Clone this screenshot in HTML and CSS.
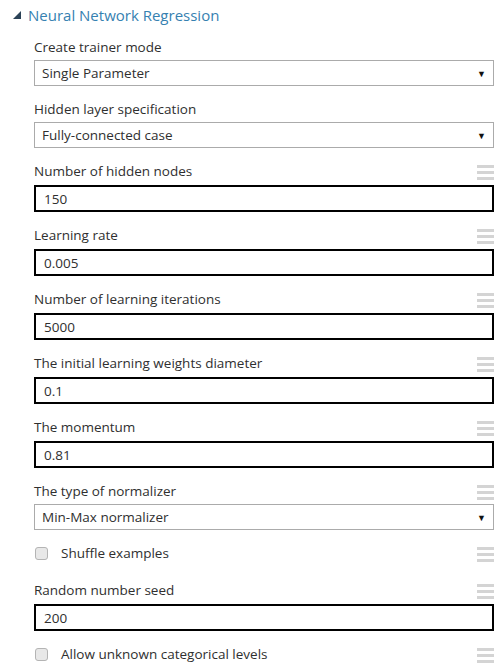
FILE: index.html
```html
<!DOCTYPE html>
<html>
<head>
<meta charset="utf-8">
<link rel="stylesheet" href="styles.css">
</head>
<body>
<div class="panel">
  <div class="header">
    <svg class="caret" width="8" height="8" viewBox="0 0 8 8"><polygon points="8,0 8,8 0,8" fill="#2b4257"/></svg>
    <span class="title">Neural Network Regression</span>
  </div>
  <div class="fields">
    <div class="field">
      <div class="label"><span>Create trainer mode</span></div>
      <div class="select"><span>Single Parameter</span><span class="arrow">▼</span></div>
    </div>
    <div class="field">
      <div class="label"><span>Hidden layer specification</span></div>
      <div class="select"><span>Fully-connected case</span><span class="arrow">▼</span></div>
    </div>
    <div class="field">
      <div class="label"><span>Number of hidden nodes</span><span class="grip"><i></i><i></i><i></i></span></div>
      <div class="input">150</div>
    </div>
    <div class="field">
      <div class="label"><span>Learning rate</span><span class="grip"><i></i><i></i><i></i></span></div>
      <div class="input">0.005</div>
    </div>
    <div class="field">
      <div class="label"><span>Number of learning iterations</span><span class="grip"><i></i><i></i><i></i></span></div>
      <div class="input">5000</div>
    </div>
    <div class="field">
      <div class="label"><span>The initial learning weights diameter</span><span class="grip"><i></i><i></i><i></i></span></div>
      <div class="input">0.1</div>
    </div>
    <div class="field">
      <div class="label"><span>The momentum</span><span class="grip"><i></i><i></i><i></i></span></div>
      <div class="input">0.81</div>
    </div>
    <div class="field">
      <div class="label"><span>The type of normalizer</span><span class="grip"><i></i><i></i><i></i></span></div>
      <div class="select"><span>Min-Max normalizer</span><span class="arrow">▼</span></div>
    </div>
    <div class="check-row">
      <span class="check"><span class="box"></span><span>Shuffle examples</span></span>
      <span class="grip"><i></i><i></i><i></i></span>
    </div>
    <div class="field seed">
      <div class="label"><span>Random number seed</span><span class="grip"><i></i><i></i><i></i></span></div>
      <div class="input">200</div>
    </div>
    <div class="check-row">
      <span class="check"><span class="box"></span><span>Allow unknown categorical levels</span></span>
      <span class="grip"><i></i><i></i><i></i></span>
    </div>
  </div>
</div>
</body>
</html>
```

FILE: styles.css
```css
html, body {
  margin: 0;
  padding: 0;
  background: #ffffff;
}
body {
  font-family: "Open Sans", "Noto Sans", sans-serif;
  font-size: 13.5px;
  color: #2f2f2f;
}
.panel {
  width: 499px;
}
.header {
  display: flex;
  align-items: center;
  height: 30px;
  padding-left: 13px;
  box-sizing: border-box;
}
.caret {
  margin-right: 7px;
}
.title {
  font-size: 15px;
  color: #3681b1;
  line-height: 30px;
}
.fields {
  padding: 7px 5px 0 34px;
}
.field {
  margin-bottom: 13px;
}
.label {
  display: flex;
  justify-content: space-between;
  align-items: center;
  height: 20px;
  line-height: 20px;
  margin-bottom: 4px;
}
.select {
  display: flex;
  justify-content: space-between;
  align-items: center;
  height: 26px;
  box-sizing: border-box;
  border: 1px solid #ababab;
  padding: 0 7px 0 7px;
  margin-top: -1px;
  margin-bottom: 1px;
}
.arrow {
  font-size: 9px;
  color: #111;
}
.input {
  display: flex;
  align-items: center;
  height: 27px;
  box-sizing: border-box;
  border: 2px solid #000000;
  padding-left: 8px;
}
.grip {
  display: flex;
  flex-direction: column;
  gap: 3px;
  width: 17px;
  margin-top: 3px;
}
.grip i {
  display: block;
  height: 3px;
  background: #d4d4d4;
}
.check-row {
  display: flex;
  justify-content: space-between;
  align-items: center;
  height: 20px;
  margin-top: 0;
  margin-bottom: 17px;
}
.check {
  display: flex;
  align-items: center;
}
.box {
  width: 13px;
  height: 13px;
  box-sizing: border-box;
  border: 1px solid #b4b4b4;
  border-radius: 3px;
  background: #e8e8e8;
  margin: 0 13px 0 1px;
}
```
